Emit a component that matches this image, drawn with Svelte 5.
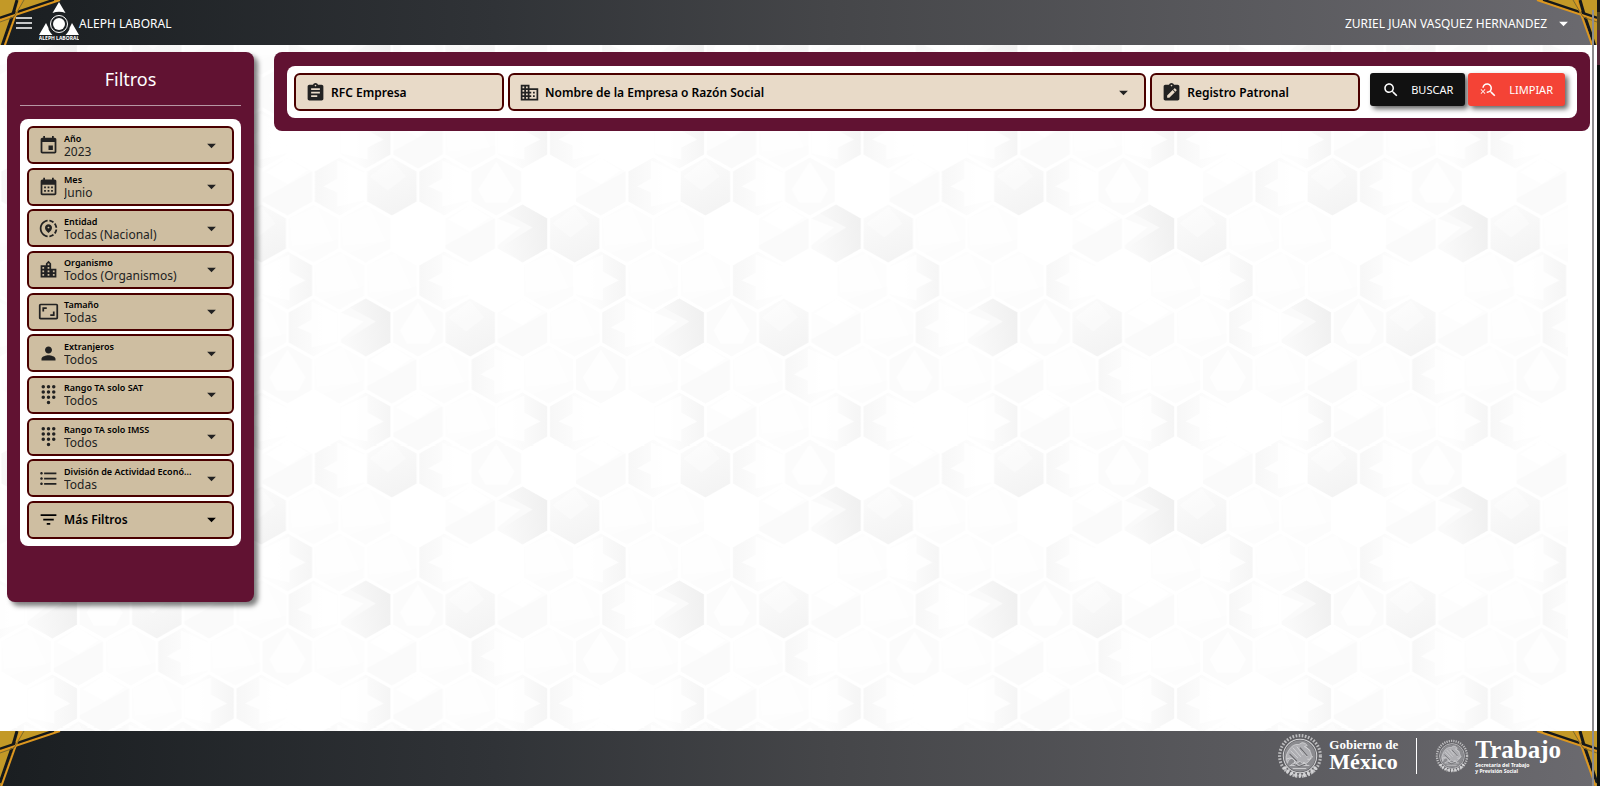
<script>
  const icons = {
    event: 'M17 12h-5v5h5v-5zM16 1v2H8V1H6v2H5c-1.11 0-1.99.9-1.99 2L3 19c0 1.1.89 2 2 2h14c1.1 0 2-.9 2-2V5c0-1.1-.9-2-2-2h-1V1h-2zm3 18H5V8h14v11z',
    month: 'M19 4h-1V2h-2v2H8V2H6v2H5c-1.11 0-1.99.9-1.99 2L3 20c0 1.1.89 2 2 2h14c1.1 0 2-.9 2-2V6c0-1.1-.9-2-2-2zm0 16H5V10h14v10zM9 14H7v-2h2v2zm4 0h-2v-2h2v2zm4 0h-2v-2h2v2zm-8 4H7v-2h2v2zm4 0h-2v-2h2v2zm4 0h-2v-2h2v2z',
    location: 'M13.02 19.93v2.02c2.01-.2 3.84-1 5.32-2.21l-1.42-1.43c-1.11.86-2.44 1.44-3.9 1.62zM4.03 12c0-4.05 3.03-7.41 6.95-7.93V2.05C5.95 2.58 2.03 6.84 2.03 12c0 5.16 3.92 9.42 8.95 9.95v-2.02c-3.92-.52-6.95-3.88-6.95-7.93zM19.95 11h2.02c-.2-2.01-1-3.84-2.21-5.32l-1.43 1.43c.86 1.1 1.44 2.43 1.62 3.89zM18.34 4.26c-1.48-1.21-3.32-2.01-5.32-2.21v2.02c1.46.18 2.79.76 3.9 1.62l1.42-1.43zM18.33 16.9l1.43 1.42c1.21-1.48 2.01-3.31 2.21-5.32h-2.02c-.18 1.46-.76 2.79-1.62 3.9zM16 11.1C16 8.61 14.1 7 12 7s-4 1.61-4 4.1c0 1.66 1.33 3.63 4 5.9 2.67-2.27 4-4.24 4-5.9zm-4 .9c-.59 0-1.07-.48-1.07-1.07 0-.59.48-1.07 1.07-1.07s1.07.48 1.07 1.07c0 .59-.48 1.07-1.07 1.07z',
    city: 'M15 11V5l-3-3-3 3v2H3v14h18V11h-6zm-8 8H5v-2h2v2zm0-4H5v-2h2v2zm0-4H5V9h2v2zm6 8h-2v-2h2v2zm0-4h-2v-2h2v2zm0-4h-2V9h2v2zm0-4h-2V5h2v2zm6 12h-2v-2h2v2zm0-4h-2v-2h2v2z',
    ratio: 'M19 12h-2v3h-3v2h5v-5zM7 9h3V7H5v5h2V9zm14-6H3c-1.1 0-2 .9-2 2v14c0 1.1.9 2 2 2h18c1.1 0 2-.9 2-2V5c0-1.1-.9-2-2-2zm0 16.01H3V4.99h18v14.02z',
    person: 'M12 12c2.21 0 4-1.79 4-4s-1.79-4-4-4-4 1.79-4 4 1.79 4 4 4zm0 2c-2.67 0-8 1.34-8 4v2h16v-2c0-2.66-5.33-4-8-4z',
    dialpad: [[12, 21], ...[3, 9, 15].flatMap((y) => [[6, y], [12, y], [18, y]])]
      .map(([x, y]) => `M${x - 2} ${y}a2 2 0 1 0 4 0a2 2 0 1 0 -4 0z`).join(''),
    list: 'M4 10.5c-.83 0-1.5.67-1.5 1.5s.67 1.5 1.5 1.5 1.5-.67 1.5-1.5-.67-1.5-1.5-1.5zm0-6c-.83 0-1.5.67-1.5 1.5S3.17 7.5 4 7.5 5.5 6.83 5.5 6 4.83 4.5 4 4.5zm0 12c-.83 0-1.5.68-1.5 1.5s.68 1.5 1.5 1.5 1.5-.68 1.5-1.5-.67-1.5-1.5-1.5zM7 19h14v-2H7v2zm0-6h14v-2H7v2zm0-8v2h14V5H7z',
    filter: 'M10 18h4v-2h-4v2zM3 6v2h18V6H3zm3 7h12v-2H6v2z',
    assignment: 'M19 3h-4.18C14.4 1.84 13.3 1 12 1c-1.3 0-2.4.84-2.82 2H5c-1.1 0-2 .9-2 2v14c0 1.1.9 2 2 2h14c1.1 0 2-.9 2-2V5c0-1.1-.9-2-2-2zm-7 0c.55 0 1 .45 1 1s-.45 1-1 1-1-.45-1-1 .45-1 1-1zm2 14H7v-2h7v2zm3-4H7v-2h10v2zm0-4H7V7h10v2z',
    business: 'M12 7V3H2v18h20V7H12zM6 19H4v-2h2v2zm0-4H4v-2h2v2zm0-4H4V9h2v2zm0-4H4V5h2v2zm4 12H8v-2h2v2zm0-4H8v-2h2v2zm0-4H8V9h2v2zm0-4H8V5h2v2zm10 12h-8v-2h2v-2h-2v-2h2v-2h-2V9h8v10zm-2-8h-2v2h2v-2zm0 4h-2v2h2v-2z',
    clipboardEdit: 'M19 3h-4.18C14.4 1.84 13.3 1 12 1c-1.3 0-2.4.84-2.82 2H5c-1.1 0-2 .9-2 2v14c0 1.1.9 2 2 2h14c1.1 0 2-.9 2-2V5c0-1.1-.9-2-2-2zm-7 0c.55 0 1 .45 1 1s-.45 1-1 1-1-.45-1-1 .45-1 1-1zM7 18v-2.5l6.3-6.3 2.5 2.5L9.500 18H7zm9.500-7l-2.500-2.500 1.200-1.200c.3-.3.7-.3 1 0l1.500 1.500c.3.3.3.7 0 1L16.500 11z',
    search: 'M15.5 14h-.79l-.28-.27C15.41 12.59 16 11.11 16 9.5 16 5.91 13.09 3 9.5 3S3 5.910 3 9.500 5.910 16 9.500 16c1.610 0 3.090-.59 4.230-1.570l.27.28v.79l5 4.990L20.490 19l-4.990-5zm-6 0C7.010 14 5 11.990 5 9.500S7.010 5 9.500 5 14 7.010 14 9.500 11.990 14 9.500 14z',
    searchOff: 'M15.5 14h-.79l-.28-.27C15.41 12.59 16 11.11 16 9.5 16 5.91 13.09 3 9.5 3 6.08 3 3.28 5.64 3.03 9h2.02C5.3 6.75 7.18 5 9.5 5 11.99 5 14 7.01 14 9.5S11.99 14 9.5 14c-.17 0-.33-.03-.5-.05v2.02c.17.02.33.03.5.03 1.61 0 3.09-.59 4.23-1.57l.27.28v.79l5 4.99L20.49 19l-4.99-5zM6.47 10.82L4 13.29l-2.47-2.47-.71.71L3.29 14 .82 16.47l.71.71L4 14.71l2.47 2.47.71-.71L4.71 14l2.47-2.47z',
    caret: 'M7 10l5 5 5-5z'
  };

  const filters = [
    { id: 'anio', label: 'Año', value: '2023', icon: 'event' },
    { id: 'mes', label: 'Mes', value: 'Junio', icon: 'month' },
    { id: 'entidad', label: 'Entidad', value: 'Todas (Nacional)', icon: 'location' },
    { id: 'organismo', label: 'Organismo', value: 'Todos (Organismos)', icon: 'city' },
    { id: 'tamano', label: 'Tamaño', value: 'Todas', icon: 'ratio' },
    { id: 'extranjeros', label: 'Extranjeros', value: 'Todos', icon: 'person' },
    { id: 'sat', label: 'Rango TA solo SAT', value: 'Todos', icon: 'dialpad' },
    { id: 'imss', label: 'Rango TA solo IMSS', value: 'Todos', icon: 'dialpad' },
    { id: 'division', label: 'División de Actividad Econó...', value: 'Todas', icon: 'list' }
  ];

  // Hexagon wallpaper: one repeating tile of six rows by six cells.
  const cell = 52.25;
  const tileW = cell * 6;
  const tileH = 282;
  const rows = [
    ['ball', 'left', 'diamond', 'white', 'low', 'left'],
    ['white', 'low', 'darkRight', 'ball', 'faint', 'faint'],
    ['faint', 'left', 'white', 'faint', 'right', 'faint'],
    ['diamond', 'ball', 'low', 'faint', 'left', 'darkRight'],
    ['low', 'faint', 'left', 'faint', 'diamond', 'faint'],
    ['low', 'faint', 'right', 'left', 'white', 'right']
  ];
  const cells = rows.flatMap((row, r) =>
    row.flatMap((kind, i) => {
      const x = (r % 2 ? 104.5 : 78.4) + i * cell;
      const y = 23.5 + r * 47;
      return [[x, y], [x - tileW, y], [x, y - tileH], [x - tileW, y - tileH], [x, y + tileH], [x - tileW, y + tileH]].map(([cx, cy]) => ({ kind, cx, cy }));
    })
  ).filter((c) => c.cx > -30 && c.cx < tileW + 30 && c.cy > -32 && c.cy < tileH + 32);

  const spokes = Array.from({ length: 28 }, (_, i) => (i * 360) / 28);
</script>

{#snippet icon(name, size = 21)}
  <svg class="icon" width={size} height={size} viewBox="0 0 24 24" aria-hidden="true"><path fill-rule="evenodd" d={icons[name]} /></svg>
{/snippet}

{#snippet corner(side)}
  <svg class="corner {side}" width="62" height="56" viewBox="0 0 62 56" aria-hidden="true">
    <path d="M0 0H58L14 15L0 56Z" fill="#c39927" />
    <path d="M54 0L0 18" stroke="#15181a" stroke-width="3" />
    <path d="M17 0L13 14L0 52" stroke="#15181a" stroke-width="3" fill="none" />
    <path d="M60 0L0 20" stroke="#dd971f" stroke-width="2" />
    <path d="M21 0L1 56" stroke="#dd971f" stroke-width="2" />
    <path d="M24 0L14 17L0 22" stroke="#806a2c" fill="none" />
  </svg>
{/snippet}

{#snippet seal(size)}
  <svg width={size} height={size} viewBox="0 0 44 44" fill="none" stroke="#d3d3d5" aria-hidden="true">
    <circle cx="22" cy="22" r="19.500" stroke-width="3" stroke-dasharray="1.600 1.400" opacity=".8" />
    <circle cx="22" cy="22" r="16" stroke-width="1" />
    <circle cx="22" cy="22" r="15" fill="#8b8b8f" stroke="none" />
    {#each spokes as a}
      {#if a > 30 && a < 150}
        <path d="M22 38q3 2 0 5q-3-2 0-5" fill="#d3d3d5" stroke="none" transform="rotate({a - 90} 22 22)" />
      {/if}
    {/each}
    <path d="M11 17q4-7 10-6q3-3 6-1l2 2l-3 1q6 2 7 9q-2 7-8 8l-3-3l-6 4q2-4 0-7q-5 0-6 5q-3-6 1-12z" fill="#aeaeb2" stroke="#cfcfd2" stroke-width=".8" />
    <path d="M13 17l7 7M15 14l8 9M19 13l6 8M24 17l5 6M9 25q6-3 9 3t9 0M12 31h19M15 34h13M29 25q4 1 5-3M27 13l5 4M17 28l-4 3M25 28l4 3" stroke="#d8d8da" stroke-width=".8" />
    <path d="M12 20l7 7M22 14l7 8M16 30l5 2l6-2" stroke="#66666a" />
  </svg>
{/snippet}

<div class="page">
  <svg class="wallpaper" aria-hidden="true">
    <defs>
      <linearGradient id="gBall" x1=".3" y1="0" x2=".7" y2="1"><stop offset="0" stop-color="#fbfbfb" /><stop offset="1" stop-color="#f3f3f3" /></linearGradient>
      <linearGradient id="gDark" x1="0" y1=".6" x2="1" y2=".4"><stop offset="0" stop-color="#fafafa" /><stop offset="1" stop-color="#f0f0f0" /></linearGradient>
      <linearGradient id="gLeft" x1="0" y1="0" x2="1" y2="0"><stop offset="0" stop-color="#f7f7f7" /><stop offset=".7" stop-color="#fdfdfd" /></linearGradient>
      <linearGradient id="gRight" x1="1" y1="0" x2="0" y2="0"><stop offset="0" stop-color="#f5f5f5" /><stop offset=".7" stop-color="#fdfdfd" /></linearGradient>
      <pattern id="hex" width={tileW} height={tileH} patternUnits="userSpaceOnUse" patternTransform="translate(0 163)">
        {#each cells as c}
          <g transform="translate({c.cx} {c.cy})">
            {#if c.kind === 'ball'}
              <path d="M0-29L24.700-15V15L0 29L-24.700 15V-15Z" fill="url(#gBall)" />
              <path d="M0-27L14-10L-4 4L-22-10Z" fill="#fff" opacity=".35" />
            {:else if c.kind === 'diamond'}
              <path d="M0-29L24.700-15V15L0 29L-24.700 15V-15Z" fill="#fbfbfb" />
              <path d="M0-25L18 3L11 16H-11L-18 3Z" fill="#fff" opacity=".75" />
            {:else if c.kind === 'low'}
              <path d="M0-29L24.700-15V15L0 29L-24.700 15V-15Z" fill="#fdfdfd" />
              <path d="M24.700-15V15L0 29L-24.700 15V12Z" fill="#fafafa" />
              <path d="M0-29L20-16L0 -2L-22-14Z" fill="#fff" />
            {:else if c.kind === 'darkRight'}
              <path d="M0-29L24.700-15V15L0 29L-24.700 15V-15Z" fill="#fafafa" />
              <path d="M0-29L24.700-15V15L0 29L-22 14L10-6L-16-20Z" fill="url(#gDark)" />
              <path d="M-24.700-15L-2-6L-24.700 12Z" fill="#fff" opacity=".7" />
            {:else if c.kind === 'left'}
              <path d="M0-29L24.700-15V15L0 29L-24.700 15V-15Z" fill="url(#gLeft)" />
              <path d="M-2-26L24.700-14V14L-2 20V6L-16 0L-2-8Z" fill="#fff" opacity=".8" />
            {:else if c.kind === 'right'}
              <path d="M0-29L24.700-15V15L0 29L-24.700 15V-15Z" fill="url(#gRight)" />
              <path d="M2-26L-24.700-14V14L2 20V8L18 0L2-9Z" fill="#fff" opacity=".8" />
            {:else if c.kind === 'faint'}
              <path d="M0-29L24.700-15V15L0 29L-24.700 15V-15Z" fill="#fdfdfd" />
              <path d="M4-27L20 8L-22 12L-24-15Z" fill="#fff" opacity=".7" />
              <path d="M24.700 6V15L0 29L-16 20Z" fill="#fcfcfc" />
            {/if}
          </g>
        {/each}
      </pattern>
    </defs>
    <rect width="100%" height="100%" fill="url(#hex)" />
  </svg>

  <header class="bar top">
    {@render corner('left')}
    {@render corner('right')}
    <button class="plain" aria-label="Menú">
      <svg width="16" height="12" viewBox="0 0 16 12" aria-hidden="true"><path d="M0 1H16M0 6H16M0 11H16" stroke="#fff" stroke-width="1.500" /></svg>
    </button>
    <svg class="logo" width="40" height="40" viewBox="0 0 40 40" fill="#fff" aria-hidden="true">
      <path d="M20 1L26.500 12Q20 9.500 13.500 12Z" />
      <path d="M7 22L0 34H13.500Q9 29 9.500 27Z" />
      <path d="M33 22L40 34H26.500Q31 29 30.500 27Z" />
      <circle cx="20" cy="23" r="6" />
      <circle cx="20" cy="23" r="8.500" fill="none" stroke="#fff" />
      <text x="20" y="39" text-anchor="middle" class="tiny">ALEPH LABORAL</text>
    </svg>
    <span class="brand">ALEPH LABORAL</span>
    <button class="plain user">ZURIEL JUAN VASQUEZ HERNANDEZ {@render icon('caret')}</button>
  </header>

  <main>
    <aside>
      <h1>Filtros</h1>
      <hr />
      <div class="panel filters">
        {#each filters as f}
          <div class="field">
            {@render icon(f.icon)}
            <div class="stack">
              <label for={f.id}>{f.label}</label>
              <select id={f.id}><option>{f.value}</option></select>
            </div>
            {@render icon('caret')}
          </div>
        {/each}
        <button class="field more">{@render icon('filter')}<span class="grow">Más Filtros</span>{@render icon('caret')}</button>
      </div>
    </aside>

    <section>
      <form class="panel search" onsubmit={(e) => e.preventDefault()}>
        <div class="field light">{@render icon('assignment')}<input aria-label="RFC Empresa" placeholder="RFC Empresa" /></div>
        <div class="field light">
          {@render icon('business')}
          <select class="strong" aria-label="Nombre de la Empresa o Razón Social"><option>Nombre de la Empresa o Razón Social</option></select>
          {@render icon('caret')}
        </div>
        <div class="field light">{@render icon('clipboardEdit')}<input aria-label="Registro Patronal" placeholder="Registro Patronal" /></div>
        <div class="actions">
          <button class="action">{@render icon('search', 18)}BUSCAR</button>
          <button class="action red" type="reset">{@render icon('searchOff', 18)}LIMPIAR</button>
        </div>
      </form>
    </section>
  </main>

  <footer class="bar bottom">
    {@render corner('left')}
    {@render corner('right')}
    <div class="gov">
      {@render seal(46)}
      <div class="words"><span class="over">Gobierno de</span><strong class="mexico">México</strong></div>
    </div>
    <span class="rule"></span>
    <div class="gov">
      {@render seal(34)}
      <div class="words"><strong class="trabajo">Trabajo</strong><span class="under">Secretaría del Trabajo<br />y Previsión Social</span></div>
    </div>
  </footer>

  <div class="edge" aria-hidden="true"></div>
</div>

<style>
  :global(body) { background: #fff; }
  .page {
    position: relative;
    display: flex;
    flex-direction: column;
    min-height: 100vh;
    overflow: hidden;
    font-family: 'Noto Sans', sans-serif;
    font-size: 12px;
    color: #222;
  }
  .page * { box-sizing: border-box; }
  .wallpaper { position: absolute; top: 0; left: 0; width: calc(100% - 32px); height: 100%; }
  .icon { flex: none; fill: currentColor; }
  button, input, select { font: inherit; color: inherit; }

  .bar {
    position: relative;
    display: flex;
    align-items: center;
    margin-right: 3px;
    color: #fff;
    background: linear-gradient(90deg, #1a1e21, #303337 31%, #454649 52%, #6b6a6f);
    overflow: hidden;
  }
  .corner { position: absolute; top: 0; fill: none; }
  .corner.left { left: 0; }
  .corner.right { right: 0; transform: scaleX(-1); }
  .top { height: 45px; padding: 1px 23px 0 16px; }
  .plain { position: relative; display: flex; align-items: center; padding: 0; border: 0; background: none; }
  .logo { margin: 0 0 5px 7px; }
  .tiny { font-size: 5px; font-weight: 700; }
  .user { margin-left: auto; gap: 6px; }

  main { position: relative; flex: 1; display: flex; align-items: flex-start; gap: 20px; padding: 7px 10px 0 7px; }
  aside {
    flex: none;
    width: 247px;
    min-height: 550px;
    padding: 14px 13px;
    border-radius: 8px;
    background: #611232;
    box-shadow: 4px 4px 5px rgba(0, 0, 0, 0.5);
  }
  h1 { margin: 0; font-size: 18px; line-height: 26px; font-weight: 400; text-align: center; color: #fff; }
  hr { margin: 13px 0; border: 0; border-top: 1px solid #b797a4; }
  .panel { border-radius: 8px; background: #fff; padding: 7px; }
  .filters { display: flex; flex-direction: column; justify-content: space-between; min-height: 427px; }
  .field {
    display: flex;
    align-items: center;
    height: 38px;
    min-width: 0;
    padding: 0 10px 0 9px;
    border: 2px solid #4a0000;
    border-radius: 6px;
    background: #cebea1;
  }
  .field > .icon:first-child { margin-right: 5px; }
  .light { background: #e8dac8; }
  .stack { flex: 1; min-width: 0; display: flex; flex-direction: column; padding-top: 1px; }
  label { font-size: 9px; line-height: 11px; font-weight: 600; color: #000; white-space: nowrap; }
  select { appearance: none; width: 100%; padding: 0; border: 0; background: none; line-height: 15px; }
  .more, .strong, input { font-weight: 600; color: #000; }
  .grow { flex: 1; text-align: left; }
  input { width: 100%; min-width: 0; padding: 0; border: 0; background: none; }
  input::placeholder { color: #000; opacity: 1; }

  section { flex: 1; min-width: 0; padding: 14px 13px 13px; border-radius: 8px; background: #611232; }
  .search { display: grid; grid-template-columns: 210px 1fr 210px auto; gap: 4px; padding: 7px 12px 7px 7px; }
  .actions { display: flex; gap: 3px; margin-left: 6px; }
  .action {
    display: flex;
    align-items: center;
    gap: 11px;
    height: 33px;
    padding: 0 12px;
    border: 0;
    border-radius: 3px;
    background: #111;
    color: #fff;
    font-size: 11px;
    box-shadow: 3px 3px 5px rgba(0, 0, 0, 0.6);
  }
  .red { background: #f44336; }

  .bottom { height: 55px; justify-content: flex-end; padding: 0 36px 6px 0; gap: 18px; }
  .gov { display: flex; align-items: center; gap: 6px; }
  .words { display: flex; flex-direction: column; }
  .over { font: 700 13px/13px 'Liberation Serif', serif; }
  .mexico { font: 700 22px/22px 'Liberation Serif', serif; }
  .trabajo { font: 700 25px/25px 'Liberation Serif', serif; }
  .under { font-size: 5px; line-height: 6px; font-weight: 700; }
  .rule { width: 1px; height: 36px; background: #fff; }

  .edge {
    position: absolute;
    top: 0;
    right: 0;
    bottom: 0;
    width: 3px;
    background: linear-gradient(#1a1712 12px, #4b4024 12px 30px, #54283b 30px 65px, #0b0f0e 65px);
  }
  .edge::before { content: ''; position: absolute; top: 10px; bottom: 0; left: -5px; width: 2px; background: #8c8c8e; }
</style>
